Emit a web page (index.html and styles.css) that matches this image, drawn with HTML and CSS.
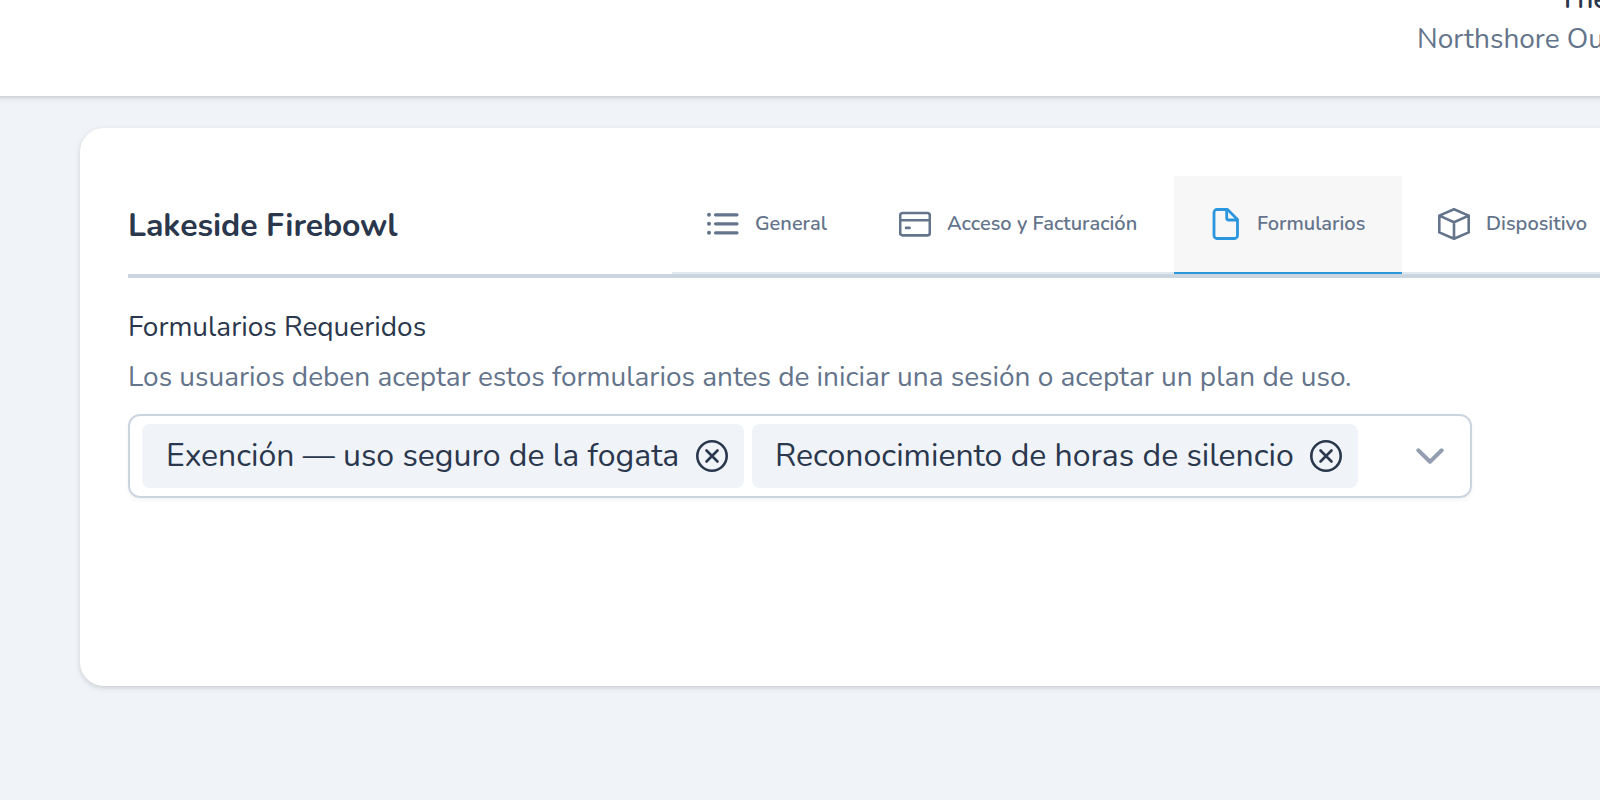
FILE: index.html
```
<!DOCTYPE html>
<html lang="es">
<head>
<meta charset="utf-8">
<title>Lakeside Firebowl</title>
<link rel="stylesheet" href="styles.css">
</head>
<body>
<header class="topbar">
  <div class="account">
    <div class="account-name">Theo</div>
    <div class="account-org">Northshore Outfitters</div>
  </div>
</header>
<main class="card">
  <div class="card-head">
    <h1 class="title">Lakeside Firebowl</h1>
    <nav class="tabs">
      <a class="tab tab-general">
        <svg class="icon list-icon" viewBox="0 0 32 32"><path d="M8.500 6.800h21.500M8.500 15.800h21.500M8.500 24.800h21.500"/><path d="M2 6.800h.01M2 15.800h.01M2 24.800h.01" class="dots"/></svg>
        <span>General</span>
      </a>
      <a class="tab tab-access">
        <svg class="icon" viewBox="0 0 32 32"><rect x="1.200" y="5" width="29.600" height="22.400" rx="2.400"/><path d="M1.200 12.300h29.600M7 19.900h3.600"/></svg>
        <span>Acceso y Facturación</span>
      </a>
      <a class="tab tab-forms active">
        <svg class="icon" viewBox="0 0 32 32"><path d="M18.500 1.500H8a3 3 0 0 0-3 3v23a3 3 0 0 0 3 3h17.500a3 3 0 0 0 3-3V11.500z"/><path d="M17.700 1.500V10a2 2 0 0 0 2 2H28"/></svg>
        <span>Formularios</span>
      </a>
      <a class="tab tab-device">
        <svg class="icon" viewBox="0 0 32 32"><path d="M16 1.300L30.700 7.600v16.800L16 30.700 1.300 24.400V7.600zM1.300 7.600L16 14.200 30.700 7.600M16 14.200v16.500"/></svg>
        <span>Dispositivo</span>
      </a>
    </nav>
  </div>
  <section class="forms">
    <h2 class="label">Formularios Requeridos</h2>
    <p class="hint">Los usuarios deben aceptar estos formularios antes de iniciar una sesión o aceptar un plan de uso.</p>
    <div class="select">
      <div class="chip chip-first"><span>Exención — uso seguro de la fogata</span>
        <svg class="remove" viewBox="0 0 32 32"><circle cx="16" cy="16" r="14.700"/><path d="M10.500 10.500l11 11M21.500 10.500l-11 11"/></svg></div>
      <div class="chip chip-second"><span>Reconocimiento de horas de silencio</span>
        <svg class="remove" viewBox="0 0 32 32"><circle cx="16" cy="16" r="14.700"/><path d="M10.500 10.500l11 11M21.500 10.500l-11 11"/></svg></div>
      <svg class="chevron" viewBox="0 0 28 16"><path d="M2.300 2.300L14 13.700 25.700 2.300"/></svg>
    </div>
  </section>
</main>
</body>
</html>
```

FILE: styles.css
```
* { box-sizing: border-box; margin: 0; padding: 0; }
body { width: 1600px; height: 800px; overflow: hidden; background: #f0f4f9; font-family: Nunito, Lato, "Open Sans", sans-serif; color: #2a374c; }
.topbar { height: 96px; margin: 0 -20px; padding-right: 20px; background: #fff; box-shadow: 0 2px 6px rgba(0,0,0,.1), 0 2px 2px rgba(0,0,0,.06); display: flex; justify-content: flex-end; }
.account { width: 183px; margin-top: -18px; white-space: nowrap; font-size: 28px; }
.account-name { line-height: 35px; padding-left: 142px; font-weight: 600; }
.account-org { line-height: 44px; color: #64748b; }
.card { margin: 32px 0 0 80px; width: 1680px; height: 558px; border-radius: 24px; background: #fff; padding: 48px; box-shadow: 0 2px 6px rgba(0,0,0,.1), 0 2px 4px rgba(0,0,0,.06); }
.card-head { display: flex; justify-content: space-between; height: 102px; border-bottom: 4px solid #cbd5e0; }
.title { font-size: 32px; line-height: 98px; padding-top: 1px; height: 98px; font-weight: 700; white-space: nowrap; letter-spacing: -.06px; }
.tabs { display: flex; width: 1040px; height: 98px; border-bottom: 2px solid #e2e8f0; }
.tab { height: 98px; padding: 0 36px 2px 35px; display: flex; align-items: center; gap: 16px; color: #64748b; font-size: 20px; font-weight: 600; white-space: nowrap; flex: none; }
.tab span { padding-bottom: 2px; }
.tab-general { width: 191px; }
.tab-access { width: 311px; padding-left: 36px; }
.tab-forms { width: 228px; }
.tab-device { width: 220px; padding-left: 36px; }
.active { background: #f7f7f7; border-bottom: 2px solid #2b95dd; padding-bottom: 0; }
.icon { width: 32px; height: 32px; flex: none; fill: none; stroke: #64748b; stroke-width: 2.600; stroke-linecap: round; stroke-linejoin: round; }
.list-icon { stroke-width: 3.200; }
.active .icon { stroke: #2b95dd; stroke-width: 2.800; }
.dots { stroke-width: 4; }
.forms { padding-top: 25px; white-space: nowrap; }
.label { font-size: 28px; font-weight: 400; line-height: 48px; }
.hint { font-size: 28px; line-height: 52px; color: #64748b; }
.select { margin-top: 11px; width: 1344px; height: 84px; border: 2px solid #cbd5e0; border-radius: 12px; display: flex; align-items: center; gap: 8px; padding: 0 26px 0 12px; box-shadow: 0 2px 4px rgba(0,0,0,.05); }
.chip { height: 64px; border-radius: 8px; background: #f0f4f9; display: flex; align-items: center; justify-content: space-between; padding: 0 16px 0 24px; font-size: 32px; }
.chip span { padding-bottom: 2px; }
.chip-first { width: 602px; }
.chip-second { width: 606px; padding-left: 23px; }
.remove { width: 32px; height: 32px; fill: none; stroke: #2a374c; stroke-width: 2.600; stroke-linecap: round; flex: none; }
.chevron { width: 28px; height: 16px; margin-left: auto; fill: none; stroke: #949eb0; stroke-width: 4; stroke-linecap: round; stroke-linejoin: round; }
```
